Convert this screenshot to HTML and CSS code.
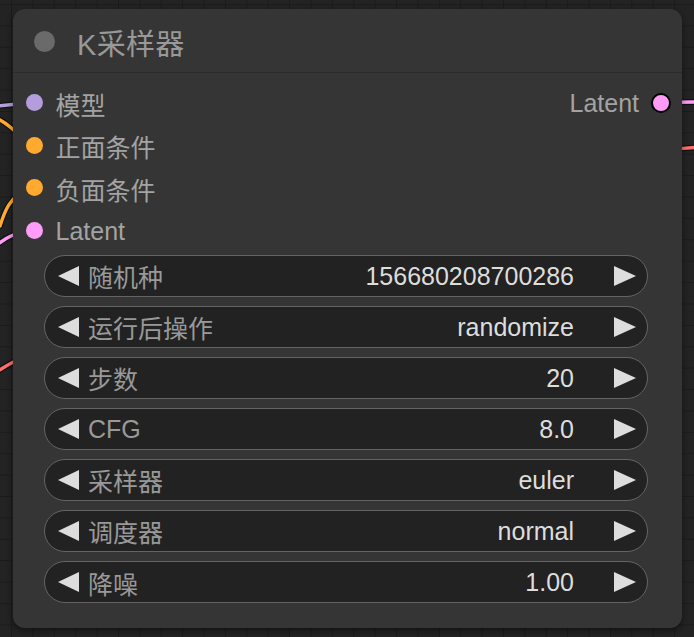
FILE: index.html
```html
<!DOCTYPE html>
<html lang="zh">
<head>
<meta charset="utf-8">
<title>K采样器</title>
<link rel="stylesheet" href="styles.css">
</head>
<body>
<div class="canvas">
  <svg class="wires" width="694" height="637" viewBox="0 0 694 637">
    <g class="wire-shadow">
      <path d="M -2 106 C 6 105, 14 104, 30 103"/>
      <path d="M -4 118 C 6 122, 14 130, 30 146"/>
      <path d="M 0 226 C 5 210, 10 196, 30 189"/>
      <path d="M -2 244 C 6 238, 14 233, 30 231"/>
      <path d="M -2 371 C 6 366, 12 362, 24 357"/>
      <path d="M 665 103 C 675 102, 685 102, 700 102"/>
      <path d="M 665 150 C 675 149, 685 148, 700 147"/>
    </g>
    <path class="w-model" d="M -2 106 C 6 105, 14 104, 30 103"/>
    <path class="w-cond" d="M -4 118 C 6 122, 14 130, 30 146"/>
    <path class="w-cond" d="M 0 226 C 5 210, 10 196, 30 189"/>
    <path class="w-latent" d="M -2 244 C 6 238, 14 233, 30 231"/>
    <path class="w-red" d="M -2 371 C 6 366, 12 362, 24 357"/>
    <path class="w-latent" d="M 665 103 C 675 102, 685 102, 700 102"/>
    <path class="w-red" d="M 665 150 C 675 149, 685 148, 700 147"/>
  </svg>

  <div class="node">
    <div class="node-title">
      <span class="title-dot"></span>
      <span class="title-text">K采样器</span>
    </div>

    <div class="slots">
      <div class="slot-row">
        <div class="slot-in"><span class="dot dot-model"></span><span class="slot-label">模型</span></div>
        <div class="slot-out"><span class="slot-label">Latent</span><span class="dot dot-latent dot-out"></span></div>
      </div>
      <div class="slot-row">
        <div class="slot-in"><span class="dot dot-cond"></span><span class="slot-label">正面条件</span></div>
      </div>
      <div class="slot-row">
        <div class="slot-in"><span class="dot dot-cond"></span><span class="slot-label">负面条件</span></div>
      </div>
      <div class="slot-row">
        <div class="slot-in"><span class="dot dot-latent"></span><span class="slot-label">Latent</span></div>
      </div>
    </div>

    <div class="widgets">
      <div class="widget"><span class="arrow arrow-left"></span><span class="w-label">随机种</span><span class="w-value">156680208700286</span><span class="arrow arrow-right"></span></div>
      <div class="widget"><span class="arrow arrow-left"></span><span class="w-label">运行后操作</span><span class="w-value">randomize</span><span class="arrow arrow-right"></span></div>
      <div class="widget"><span class="arrow arrow-left"></span><span class="w-label">步数</span><span class="w-value">20</span><span class="arrow arrow-right"></span></div>
      <div class="widget"><span class="arrow arrow-left"></span><span class="w-label">CFG</span><span class="w-value">8.0</span><span class="arrow arrow-right"></span></div>
      <div class="widget"><span class="arrow arrow-left"></span><span class="w-label">采样器</span><span class="w-value">euler</span><span class="arrow arrow-right"></span></div>
      <div class="widget"><span class="arrow arrow-left"></span><span class="w-label">调度器</span><span class="w-value">normal</span><span class="arrow arrow-right"></span></div>
      <div class="widget"><span class="arrow arrow-left"></span><span class="w-label">降噪</span><span class="w-value">1.00</span><span class="arrow arrow-right"></span></div>
    </div>
  </div>
</div>
</body>
</html>
```

FILE: styles.css
```css
html, body {
  margin: 0;
  padding: 0;
  background: #222222;
  overflow: hidden;
}

.canvas {
  position: relative;
  width: 694px;
  height: 637px;
  padding: 9px 0 0 13px;
  box-sizing: border-box;
  background-color: #232323;
  background-image:
    linear-gradient(to right, #1b1b1b 1px, transparent 1px),
    linear-gradient(to bottom, #1b1b1b 1px, transparent 1px);
  background-size: 21.4px 21.4px;
  background-position: 11px 4px;
  font-family: "Liberation Sans", Arial, "Noto Sans CJK SC", sans-serif;
}

.wires {
  position: absolute;
  left: 0;
  top: 0;
  fill: none;
  stroke-linecap: round;
}
.wire-shadow path { stroke: #111; stroke-width: 6; }
.w-model { stroke: #b39ddb; stroke-width: 3.5; }
.w-cond { stroke: #ffa931; stroke-width: 3.5; }
.w-latent { stroke: #ff9cf9; stroke-width: 3.5; }
.w-red { stroke: #ff6e6e; stroke-width: 3.5; }

.node {
  position: relative;
  width: 669px;
  height: 619px;
  background: #353535;
  border-radius: 12px;
  box-shadow: 0 3px 6px rgba(0, 0, 0, 0.45);
  display: flex;
  flex-direction: column;
}

.node-title {
  height: 63px;
  border-bottom: 1.5px solid #2b2b2b;
  display: flex;
  align-items: center;
  padding-left: 21px;
  box-sizing: content-box;
}
.title-dot {
  width: 21px;
  height: 21px;
  border-radius: 50%;
  background: #6a6a6a;
  margin-top: 2px;
}
.title-text {
  margin-left: 22px;
  font-size: 29px;
  color: #999999;
  margin-top: 2px;
  letter-spacing: 0.3px;
}

.slots {
  padding-top: 8.5px;
  display: flex;
  flex-direction: column;
}
.slot-row {
  height: 42.5px;
  display: flex;
  align-items: center;
  justify-content: space-between;
}
.slot-in {
  display: flex;
  align-items: center;
  padding-left: 12.5px;
}
.slot-out {
  display: flex;
  align-items: center;
  padding-right: 11px;
}
.slot-label {
  font-size: 25px;
  color: #a3a3a3;
  padding-top: 2px;
}
.slot-in .slot-label { margin-left: 13px; }
.slot-out .slot-label { margin-right: 12px; }

.dot {
  width: 17px;
  height: 17px;
  border-radius: 50%;
  display: inline-block;
}
.dot-model { background: #b39ddb; }
.dot-cond { background: #ffa931; }
.dot-latent { background: #ff9cf9; }
.dot-out {
  width: 16px;
  height: 16px;
  border: 2px solid #000;
}

.widgets {
  margin-top: 3px;
  padding: 0 34px 0 31px;
  display: flex;
  flex-direction: column;
  gap: 9.1px;
}
.widget {
  height: 42px;
  box-sizing: border-box;
  border: 1.8px solid #646464;
  border-radius: 21px;
  background: #222222;
  display: flex;
  align-items: center;
  padding: 0 11px 0 13px;
  font-size: 25px;
}
.arrow {
  width: 0;
  height: 0;
  border-top: 10px solid transparent;
  border-bottom: 10px solid transparent;
}
.arrow-left { border-right: 21px solid #dddddd; }
.arrow-right { border-left: 22px solid #dddddd; }
.w-label {
  margin-left: 9px;
  color: #999999;
  flex: 1;
  padding-top: 1px;
}
.w-value {
  color: #dddddd;
  margin-right: 40px;
  padding-top: 1px;
}
```
